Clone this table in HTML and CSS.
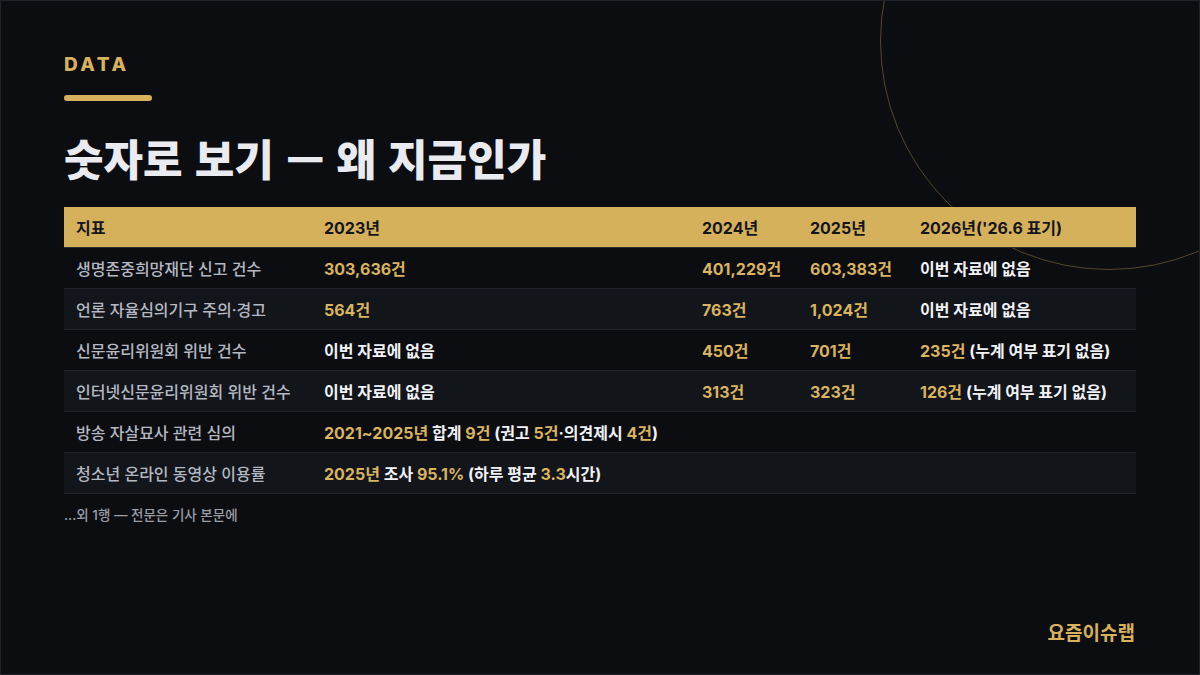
FILE: index.html
```html
<!DOCTYPE html>
<html lang="ko">
<head>
<meta charset="utf-8">
<link rel="stylesheet" href="styles.css">
</head>
<body>
<div class="slide">
  <div class="ring"></div>
  <div class="eyebrow">DATA</div>
  <div class="bar"></div>
  <h1 class="title">숫자로 보기 — 왜 지금인가</h1>
  <table class="data">
    <colgroup>
      <col class="c1"><col class="c2"><col class="c3"><col class="c4"><col class="c5">
    </colgroup>
    <thead>
      <tr><th>지표</th><th>2023년</th><th>2024년</th><th>2025년</th><th>2026년('26.6 표기)</th></tr>
    </thead>
    <tbody>
      <tr><td class="lab">생명존중희망재단 신고 건수</td><td><span class="g">303,636건</span></td><td><span class="g">401,229건</span></td><td><span class="g">603,383건</span></td><td>이번 자료에 없음</td></tr>
      <tr><td class="lab">언론 자율심의기구 주의·경고</td><td><span class="g">564건</span></td><td><span class="g">763건</span></td><td><span class="g">1,024건</span></td><td>이번 자료에 없음</td></tr>
      <tr><td class="lab">신문윤리위원회 위반 건수</td><td>이번 자료에 없음</td><td><span class="g">450건</span></td><td><span class="g">701건</span></td><td><span class="g">235건</span> (누계 여부 표기 없음)</td></tr>
      <tr><td class="lab">인터넷신문윤리위원회 위반 건수</td><td>이번 자료에 없음</td><td><span class="g">313건</span></td><td><span class="g">323건</span></td><td><span class="g">126건</span> (누계 여부 표기 없음)</td></tr>
      <tr><td class="lab">방송 자살묘사 관련 심의</td><td colspan="4"><span class="g">2021~2025년</span> 합계 <span class="g">9건</span> (권고 <span class="g">5건</span>·의견제시 <span class="g">4건</span>)</td></tr>
      <tr><td class="lab">청소년 온라인 동영상 이용률</td><td colspan="4"><span class="g">2025년</span> 조사 <span class="g">95.1%</span> (하루 평균 <span class="g">3.3</span>시간)</td></tr>
    </tbody>
  </table>
  <p class="note">...외 1행 — 전문은 기사 본문에</p>
  <div class="brand">요즘이슈랩</div>
</div>
</body>
</html>
```

FILE: styles.css
```css
* { box-sizing: border-box; margin: 0; padding: 0; }
html, body { width: 1200px; height: 675px; background: #0c0d11; overflow: hidden; }
body { font-family: Inter, "Noto Sans CJK KR", sans-serif; }
.slide {
  position: relative;
  width: 1200px;
  height: 675px;
  border: 1px solid #1e2229;
  background: #0c0d11;
  padding: 51px 63px 0 63px;
  display: flex;
  flex-direction: column;
  overflow: hidden;
}
.ring {
  position: absolute;
  left: 879px;
  top: -189px;
  width: 458px;
  height: 458px;
  border-radius: 50%;
  border: 1px solid rgba(214, 177, 92, 0.35);
}
.eyebrow {
  font-size: 19px;
  font-weight: 800;
  letter-spacing: 3.5px;
  color: #d7b15c;
  line-height: 26px;
}
.bar {
  width: 88px;
  height: 6px;
  border-radius: 3px;
  background: #d7b15c;
  margin-top: 17px;
}
.title {
  font-family: "Noto Sans CJK KR", sans-serif;
  font-size: 43px;
  font-weight: 900;
  color: #eaebf0;
  letter-spacing: 0;
  line-height: 60px;
  margin-top: 26px;
}
.data {
  margin-top: 20px;
  width: 1072px;
  border-collapse: collapse;
  table-layout: fixed;
  font-size: 16px;
  position: relative;
}
.c1 { width: 248px; }
.c2 { width: 378px; }
.c3 { width: 108px; }
.c4 { width: 110px; }
.c5 { width: 228px; }
.data th {
  background: #d6b15c;
  color: #14151a;
  font-weight: 700;
  text-align: left;
  height: 40px;
  padding: 0 12px;
  border-bottom: 1px solid #2a2b2c;
}
.data td {
  height: 41px;
  padding: 0 12px;
  color: #f1f2f5;
  font-weight: 700;
  border-bottom: 1px solid #21252c;
  white-space: nowrap;
}
.data tbody tr:nth-child(even) td { background: #12151a; }
.data td.lab { color: #b4b8c1; font-weight: 500; }
.g { color: #d9b35e; }
.note {
  margin-top: 10px;
  font-size: 13.5px;
  font-weight: 500;
  color: #9a9ea7;
}
.brand {
  position: absolute;
  right: 64px;
  bottom: 29px;
  font-family: "Noto Sans CJK KR", sans-serif;
  font-size: 19px;
  font-weight: 700;
  color: #d7b15c;
}
```
